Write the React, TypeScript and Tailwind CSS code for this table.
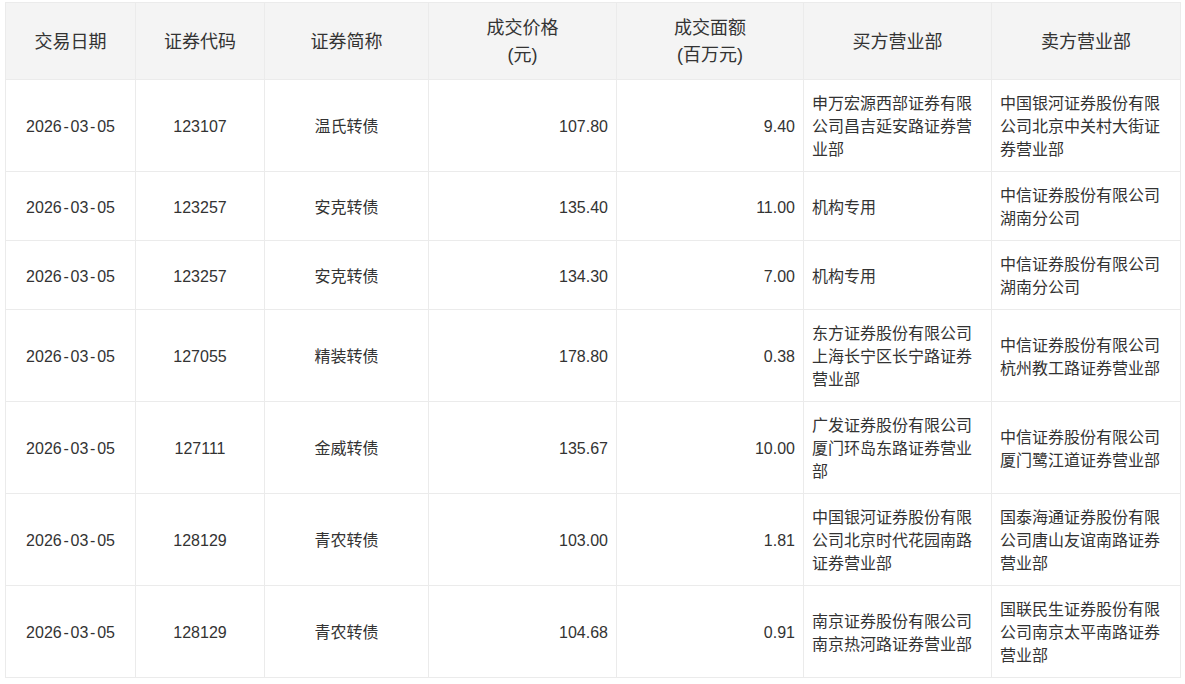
import React from "react";

type Row = {
  date: string;
  code: string;
  name: string;
  price: string;
  amount: string;
  buyer: string;
  seller: string;
};

const rows: Row[] = [
  { date: "2026-03-05", code: "123107", name: "温氏转债", price: "107.80", amount: "9.40", buyer: "申万宏源西部证券有限公司昌吉延安路证券营业部", seller: "中国银河证券股份有限公司北京中关村大街证券营业部" },
  { date: "2026-03-05", code: "123257", name: "安克转债", price: "135.40", amount: "11.00", buyer: "机构专用", seller: "中信证券股份有限公司湖南分公司" },
  { date: "2026-03-05", code: "123257", name: "安克转债", price: "134.30", amount: "7.00", buyer: "机构专用", seller: "中信证券股份有限公司湖南分公司" },
  { date: "2026-03-05", code: "127055", name: "精装转债", price: "178.80", amount: "0.38", buyer: "东方证券股份有限公司上海长宁区长宁路证券营业部", seller: "中信证券股份有限公司杭州教工路证券营业部" },
  { date: "2026-03-05", code: "127111", name: "金威转债", price: "135.67", amount: "10.00", buyer: "广发证券股份有限公司厦门环岛东路证券营业部", seller: "中信证券股份有限公司厦门鹭江道证券营业部" },
  { date: "2026-03-05", code: "128129", name: "青农转债", price: "103.00", amount: "1.81", buyer: "中国银河证券股份有限公司北京时代花园南路证券营业部", seller: "国泰海通证券股份有限公司唐山友谊南路证券营业部" },
  { date: "2026-03-05", code: "128129", name: "青农转债", price: "104.68", amount: "0.91", buyer: "南京证券股份有限公司南京热河路证券营业部", seller: "国联民生证券股份有限公司南京太平南路证券营业部" },
];

const th = "border border-[#ebebeb] px-2 pt-[12px] pb-[10px] text-[18px] leading-[27px] font-normal text-center text-[#333]";
const td = "border border-[#ebebeb] px-2 pt-[12px] pb-[10px] text-[16px] leading-[23px] text-[#333] align-middle";

function DateText({ value }: { value: string }) {
  const parts = value.split("-");
  return (
    <>
      {parts.map((p, i) => (
        <React.Fragment key={i}>
          {i > 0 && <span className="px-[1.75px]">-</span>}
          {p}
        </React.Fragment>
      ))}
    </>
  );
}

export default function App() {
  return (
    <div
      className="bg-white w-[1185px] h-[684px] pl-[5px] pt-[2px]"
      style={{ fontFamily: '"Liberation Sans", "Noto Sans CJK SC", sans-serif' }}
    >
      <table className="table-fixed border-collapse w-[1175px]">
        <colgroup>
          <col className="w-[130px]" />
          <col className="w-[129px]" />
          <col className="w-[164px]" />
          <col className="w-[188px]" />
          <col className="w-[187px]" />
          <col className="w-[188px]" />
          <col className="w-[189px]" />
        </colgroup>
        <thead>
          <tr className="bg-[#f4f4f4]">
            <th className={th}>交易日期</th>
            <th className={th}>证券代码</th>
            <th className={th}>证券简称</th>
            <th className={th}>成交价格<br />(元)</th>
            <th className={th}>成交面额<br />(百万元)</th>
            <th className={th}>买方营业部</th>
            <th className={th}>卖方营业部</th>
          </tr>
        </thead>
        <tbody>
          {rows.map((r, i) => (
            <tr key={i}>
              <td className={`${td} text-center`}><DateText value={r.date} /></td>
              <td className={`${td} text-center`}>{r.code}</td>
              <td className={`${td} text-center`}>{r.name}</td>
              <td className={`${td} text-right`}>{r.price}</td>
              <td className={`${td} text-right`}>{r.amount}</td>
              <td className={`${td} text-left`}>{r.buyer}</td>
              <td className={`${td} text-left`}>{r.seller}</td>
            </tr>
          ))}
        </tbody>
      </table>
    </div>
  );
}
